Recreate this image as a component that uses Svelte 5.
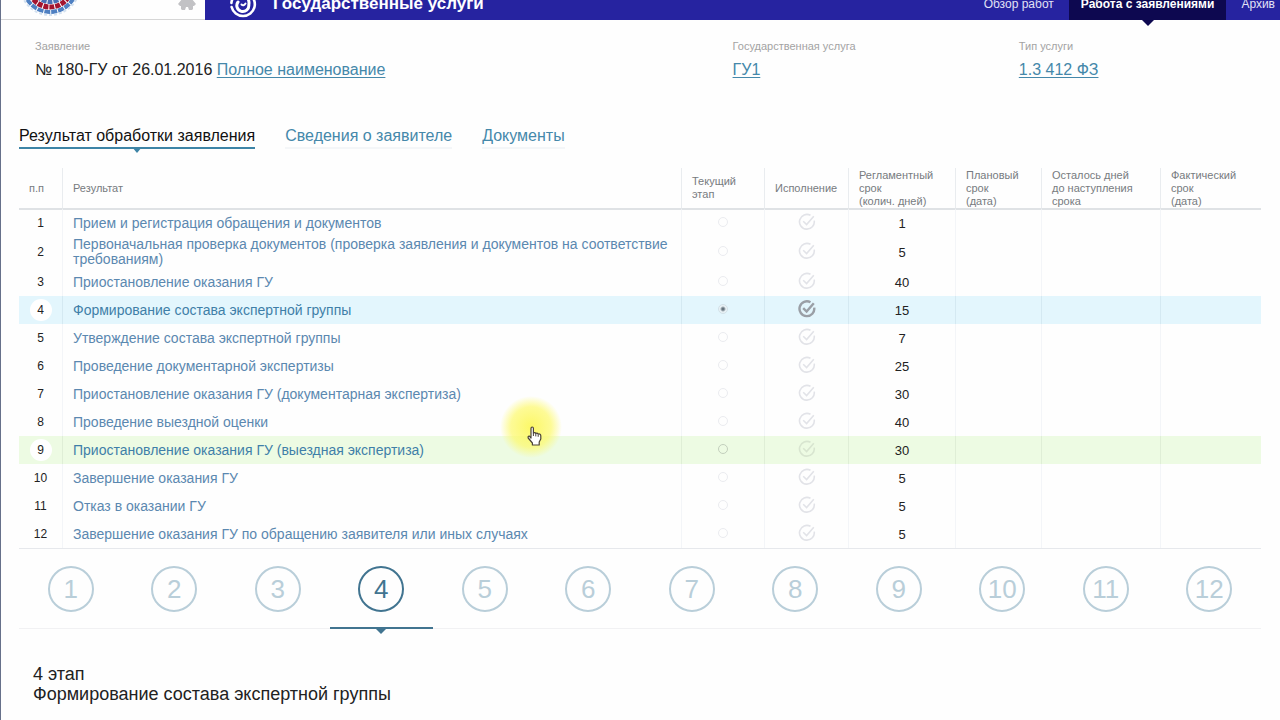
<script lang="ts">
  const columns = [
    { id: 'num', lines: ['п.п'] },
    { id: 'result', lines: ['Результат'] },
    { id: 'current', lines: ['Текущий', 'этап'] },
    { id: 'done', lines: ['Исполнение'] },
    { id: 'term', lines: ['Регламентный', 'срок', '(колич. дней)'] },
    { id: 'plan', lines: ['Плановый', 'срок', '(дата)'] },
    { id: 'left', lines: ['Осталось дней', 'до наступления', 'срока'] },
    { id: 'fact', lines: ['Фактический', 'срок', '(дата)'] },
  ];

  const stages = [
    { title: 'Прием и регистрация обращения и документов', days: 1 },
    { title: 'Первоначальная проверка документов (проверка заявления и документов на соответствие требованиям)', days: 5 },
    { title: 'Приостановление оказания ГУ', days: 40 },
    { title: 'Формирование состава экспертной группы', days: 15 },
    { title: 'Утверждение состава экспертной группы', days: 7 },
    { title: 'Проведение документарной экспертизы', days: 25 },
    { title: 'Приостановление оказания ГУ (документарная экспертиза)', days: 30 },
    { title: 'Проведение выездной оценки', days: 40 },
    { title: 'Приостановление оказания ГУ (выездная экспертиза)', days: 30 },
    { title: 'Завершение оказания ГУ', days: 5 },
    { title: 'Отказ в оказании ГУ', days: 5 },
    { title: 'Завершение оказания ГУ по обращению заявителя или иных случаях', days: 5 },
  ];

  const tabs = ['Результат обработки заявления', 'Сведения о заявителе', 'Документы'];
  const hovered = 9;

  let current = $state(4);
  let tab = $state(0);
</script>

<div class="page">
  <header>
    <div class="brand">
      <svg class="emblem" width="64" height="64" viewBox="0 0 64 64" fill="none" aria-hidden="true">
        <circle cx="32" cy="32" r="17" stroke="#4a6fb5" stroke-width="4" stroke-dasharray="5 1" />
        <circle cx="32" cy="32" r="22" stroke="#a3142f" stroke-width="5" stroke-dasharray="5 1" />
        <circle cx="32" cy="32" r="27" stroke="#4f80c2" stroke-width="4" stroke-dasharray="6 1" />
        <circle cx="32" cy="32" r="30" stroke="#d3e1f0" stroke-width="2" stroke-dasharray="3 2" />
      </svg>
      <a class="home" href="#home" aria-label="Главная">
        <svg width="18" height="18" viewBox="0 0 18 18" aria-hidden="true">
          <path d="M9 1 L18 12 L16 14 H15 V17 L14 18 H11 L10 15 H8 L7 18 H4 L3 17 V14 H2 L0 12 Z" fill="#c2c2c5" />
        </svg>
      </a>
    </div>
    <div class="bar">
      <svg class="mark" width="28" height="28" viewBox="0 0 28 28" fill="none" stroke="#fff" stroke-linecap="round" aria-hidden="true">
        <path d="M2.6 17 A11.8 11.8 0 0 0 25.5 17 A11.8 11.8 0 0 0 24 8" stroke-width="2.6" />
        <path d="M2.4 13 A11.8 11.8 0 0 1 5 6.5" stroke-width="2.6" />
        <path d="M18.5 8 Q20.6 11 19.8 15 A6 6 0 1 1 9 12" stroke-width="3" />
        <path d="M12.5 14.5 Q14.5 16.5 16.5 13.5" stroke-width="2" />
      </svg>
      <span class="service">Государственные услуги</span>
      <nav>
        <a href="#overview">Обзор работ</a>
        <a href="#claims" class="active">Работа с заявлениями</a>
        <a href="#archive">Архив</a>
      </nav>
    </div>
  </header>

  <main>
    <section class="summary">
      <div>
        <div class="label">Заявление</div>
        <div class="value">№ 180-ГУ от 26.01.2016 <a href="#full">Полное наименование</a></div>
      </div>
      <div>
        <div class="label">Государственная услуга</div>
        <div class="value"><a href="#service">ГУ1</a></div>
      </div>
      <div>
        <div class="label">Тип услуги</div>
        <div class="value"><a href="#type">1.3 412 ФЗ</a></div>
      </div>
    </section>

    <div class="tabs">
      {#each tabs as name, i}
        <button type="button" class:active={tab === i} onclick={() => (tab = i)}>{name}</button>
      {/each}
    </div>

    <table>
      <colgroup>
        {#each columns as c}<col class={c.id} />{/each}
      </colgroup>
      <thead>
        <tr>
          {#each columns as c}
            <th class={c.id} scope="col">{#each c.lines as line}<span>{line}</span>{/each}</th>
          {/each}
        </tr>
      </thead>
      <tbody>
        {#each stages as s, i}
          <tr class:current={current === i + 1} class:hovered={hovered === i + 1}>
            <td class="num"><span>{i + 1}</span></td>
            <td class="result"><a href={`#stage-${i + 1}`}>{s.title}</a></td>
            <td class="mid icon"><input type="radio" name="stage" aria-label={s.title} value={i + 1} bind:group={current} /></td>
            <td class="mid icon">
              <svg class="tick" width="18" height="18" viewBox="0 0 18 18" fill="none" stroke="currentColor" aria-hidden="true">
                <path d="M12.5 2.3 A7.4 7.4 0 1 0 16.2 7.6" />
                <path d="M5.2 8.2 L8.6 11.6 L15.8 3.2" />
              </svg>
            </td>
            <td class="mid">{s.days}</td>
            <td></td>
            <td></td>
            <td></td>
          </tr>
        {/each}
      </tbody>
    </table>

    <div class="steps">
      {#each stages as _, i}
        <button type="button" class:active={current === i + 1} onclick={() => (current = i + 1)}><span>{i + 1}</span></button>
      {/each}
    </div>

    <section class="stage">
      <div>{current} этап</div>
      <div>{stages[current - 1].title}</div>
    </section>
  </main>

  <div class="pointer" aria-hidden="true">
    <svg width="15" height="20" viewBox="0 0 15 20">
      <path d="M4 12 V2.4 Q4 1 5.2 1 Q6.4 1 6.4 2.4 V7 Q7.8 6 8.8 7.4 Q10.2 6.6 11.2 8 Q13.6 7.4 13.8 9.8 V13 L12.2 16 V19 H5.4 V17 L1.2 12 Q0.6 10 2.4 10.2 Z" fill="#fff" stroke="#4a4238" stroke-width="1.2" stroke-linejoin="round" />
      <path d="M6.4 7 V10 M8.8 7.6 V10.4 M11.2 8.2 V10.8" stroke="#4a4238" fill="none" />
    </svg>
  </div>
</div>

<style>
  :global(body) {
    margin: 0;
    background: #fff;
    overflow: hidden;
  }
  .page {
    position: relative;
    min-height: 100vh;
    box-sizing: border-box;
    border-left: 1px solid #66708a;
    background: #fefefe;
    color: #222;
    font-family: "Liberation Sans", Arial, sans-serif;
    overflow: hidden;
  }
  button {
    border: 0;
    padding: 0;
    background: none;
    font: inherit;
    cursor: pointer;
  }
  header {
    display: flex;
    height: 60px;
    margin-top: -40px;
  }
  .brand {
    display: flex;
    align-items: flex-end;
    justify-content: space-between;
    width: 204px;
    box-sizing: border-box;
    padding: 0 9px 2px 17px;
    border-bottom: 1px solid #d6d6d6;
  }
  .emblem {
    flex: none;
  }
  .home {
    display: flex;
    padding-bottom: 7px;
  }
  .bar {
    flex: 1;
    display: flex;
    align-items: flex-end;
    background: #2623a0;
    color: #fff;
  }
  .mark {
    margin: 0 16px 2px 24px;
  }
  .service {
    flex: 1;
    font-size: 17px;
    font-weight: bold;
    line-height: 20px;
    padding-bottom: 6px;
  }
  nav {
    display: flex;
    align-self: stretch;
  }
  nav a {
    position: relative;
    display: flex;
    align-items: flex-end;
    padding: 0 15px 8px;
    color: #e2e2f6;
    font-size: 12px;
    line-height: 16px;
    text-decoration: none;
  }
  nav a:last-child {
    padding-right: 5px;
  }
  nav a.active {
    padding: 0 12px 8px;
    background: #0d0850;
    color: #fff;
    font-weight: bold;
  }
  nav a.active::after,
  .tabs .active::after,
  .steps .active::after {
    content: "";
    position: absolute;
    top: 100%;
    left: 50%;
    margin-left: -6px;
    border: 6px solid transparent;
    border-top: 6px solid #0d0850;
    border-bottom: 0;
  }
  main {
    padding: 0 19px 0 18px;
  }
  .summary {
    display: grid;
    grid-template-columns: 697fr 286fr 242fr;
    padding: 18px 0 0 16px;
  }
  .label {
    color: #a3a3a3;
    font-size: 11px;
    line-height: 16px;
  }
  .value {
    margin-top: 5px;
    font-size: 16px;
    line-height: 22px;
  }
  .value a {
    color: #4588aa;
    text-underline-offset: 2px;
  }
  .tabs {
    display: flex;
    gap: 30px;
    margin-top: 44px;
    font-size: 16px;
  }
  .tabs button {
    position: relative;
    padding: 1px 0;
    border-bottom: 2px solid #f4f6f8;
    color: #4588aa;
    line-height: 20px;
  }
  .tabs .active {
    border-bottom-color: #3d84a6;
    color: #111;
  }
  .tabs .active::after {
    margin-left: -5px;
    border-width: 6px 5px 0;
    border-top-color: #3d84a6;
  }
  table {
    width: 100%;
    margin-top: 19px;
    table-layout: fixed;
    border-spacing: 0;
    border-bottom: 1px solid #e6e8ec;
  }
  col.num { width: 44px; }
  col.current { width: 83px; }
  col.done { width: 84px; }
  col.term { width: 107px; }
  col.plan { width: 86px; }
  col.left { width: 119px; }
  col.fact { width: 100px; }
  th {
    height: 40px;
    padding: 0 0 0 10px;
    border-right: 1px solid #e9ecef;
    color: #777b80;
    font-size: 11px;
    font-weight: normal;
    line-height: 13px;
    text-align: left;
    white-space: nowrap;
  }
  th span {
    display: block;
  }
  td {
    height: 28px;
    box-sizing: border-box;
    padding: 0;
    border-right: 1px solid #f3f5f8;
    font-size: 13px;
    line-height: 15px;
  }
  th:last-child,
  td:last-child {
    border-right: 0;
  }
  tbody tr:first-child td {
    border-top: 2px solid #dfe2e5;
  }
  td.num {
    text-align: center;
    font-size: 12px;
  }
  td.num span {
    display: inline-block;
    width: 22px;
    border-radius: 50%;
    line-height: 22px;
  }
  td.result {
    padding: 1px 10px;
    font-size: 14px;
  }
  td.result a {
    color: #5b88b0;
    text-decoration: none;
  }
  .mid {
    text-align: center;
  }
  .icon {
    padding-bottom: 2px;
  }
  .current td {
    background: #e3f6fd;
    border-right-color: #d4e9f2;
  }
  .hovered td {
    background: #edfbe3;
    border-right-color: #dfeed6;
  }
  .current .num span,
  .hovered .num span {
    background: #fff;
  }
  .current .result a,
  .hovered .result a {
    color: #3f7fa8;
  }
  input {
    appearance: none;
    display: block;
    width: 10px;
    height: 10px;
    margin: 0 auto;
    border: 1px solid #ebecf0;
    border-radius: 50%;
  }
  input:checked {
    border-color: #d3e1e8;
    background: radial-gradient(circle, #66747e 0 1px, #e9f2f6 3px);
  }
  .hovered input {
    border-color: #c3cfbd;
  }
  .tick {
    display: block;
    margin: 0 auto;
    color: #e2e3e8;
    stroke-width: 1.6;
  }
  .current .tick {
    color: #9a9fa6;
    stroke-width: 2.4;
  }
  .hovered .tick {
    color: #d8e5d0;
  }
  .steps {
    display: grid;
    grid-template-columns: repeat(12, 1fr);
    border-bottom: 1px solid #f1f1f3;
  }
  .steps button {
    position: relative;
    display: flex;
    justify-content: center;
    margin-bottom: -1px;
    padding: 17px 0 15px;
    border-bottom: 2px solid transparent;
    color: #b9ced9;
  }
  .steps span {
    width: 42px;
    border: 2px solid #b9ced9;
    border-radius: 50%;
    font-size: 26px;
    line-height: 42px;
  }
  .steps .active {
    border-bottom-color: #417490;
    color: #417490;
  }
  .steps .active span {
    border-color: #417490;
  }
  .steps .active::after {
    border-width: 7px 7px 0;
    margin-left: -7px;
    border-top-color: #417490;
  }
  .stage {
    padding: 35px 0 0 14px;
    font-size: 18px;
    line-height: 20px;
  }
  .pointer {
    position: absolute;
    left: 499px;
    top: 396px;
    display: grid;
    place-items: center;
    width: 62px;
    height: 62px;
    box-sizing: border-box;
    padding: 18px 0 0 7px;
    border-radius: 50%;
    background: radial-gradient(circle closest-side, #fcf756e6 0, #fdf96ab3 65%, #fffa8000 100%);
  }
</style>
